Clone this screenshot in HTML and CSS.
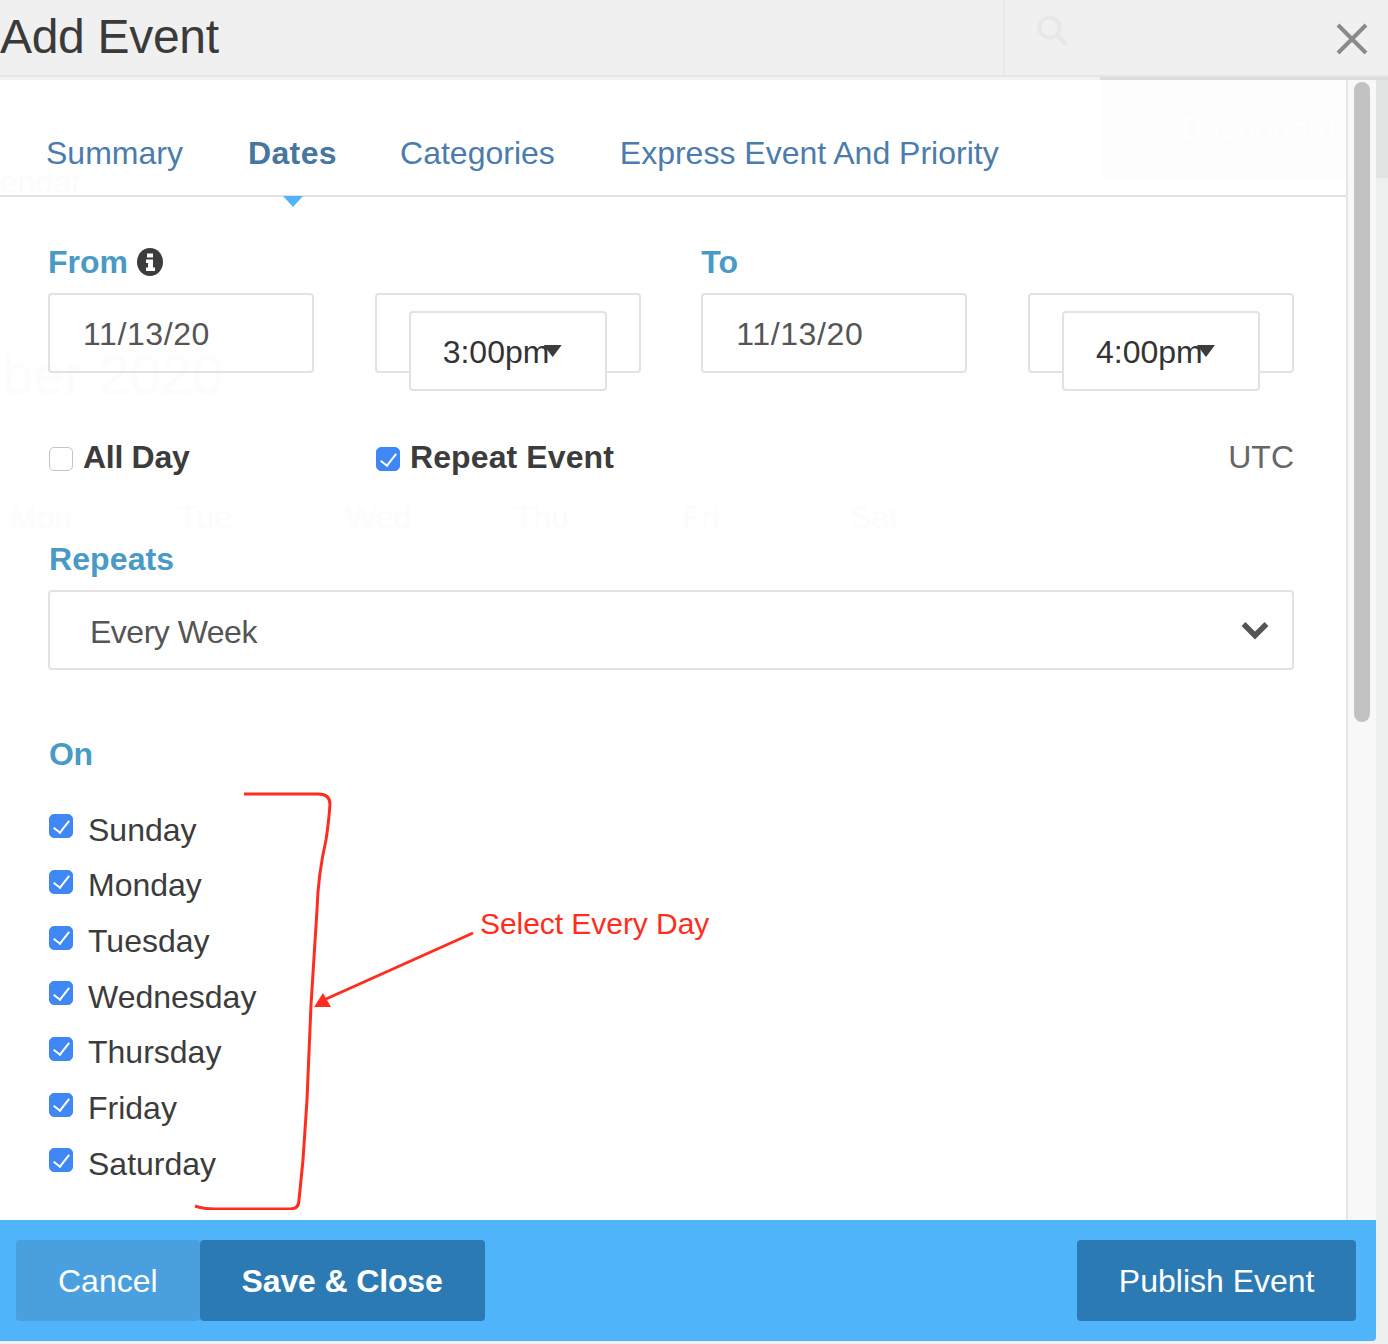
FILE: index.html
```html
<!DOCTYPE html>
<html lang="en">

<head>
    <meta charset="UTF-8">
    <meta name="viewport" content="width=device-width, initial-scale=1.0">
    <title>Add Event</title>
    <link rel="stylesheet" href="styles.css">
</head>

<body>
    <div class="page">
        <header class="top-bar">
            <h1 class="title">Add Event</h1>
            <div class="top-tools">
                <svg class="search-icon" width="30" height="30" viewBox="0 0 30 30">
                    <circle cx="12.5" cy="12.5" r="10" fill="none" stroke="#e7e7e7" stroke-width="4" />
                    <path d="M20 20l8 8" stroke="#e7e7e7" stroke-width="4" stroke-linecap="round" />
                </svg>
                <svg class="close-icon" width="32" height="32" viewBox="0 0 32 32">
                    <path d="M2 2l28 28M30 2L2 30" stroke="#8a8a8a" stroke-width="4" />
                </svg>
            </div>
        </header>
        <div class="top-edge"></div>

        <div class="modal">
            <div class="modal-body">
                <section class="panel">
                    <!-- faded page behind the modal -->
                    <div class="ghost-block"></div>
                    <span class="ghost ghost-dash">Dashboard</span>
                    <span class="ghost ghost-month">ber 2020</span>
                    <span class="ghost ghost-cal">endar</span>
                    <div class="ghost ghost-days">
                        <span>Mon</span><span>Tue</span><span>Wed</span><span>Thu</span><span>Fri</span><span>Sat</span>
                    </div>

                    <nav class="tabs">
                        <a class="tab">Summary</a>
                        <a class="tab active">Dates</a>
                        <a class="tab">Categories</a>
                        <a class="tab">Express Event And Priority</a>
                    </nav>

                    <form class="form">
                        <div class="date-grid">
                            <div class="date-col">
                                <label class="field-label">From
                                    <svg class="info-icon" width="26" height="28" viewBox="0 0 26 28">
                                        <ellipse cx="13" cy="14" rx="13" ry="14" fill="#3c3c3c" />
                                        <path d="M10 5.500h6v4h-6zM9 11.500h7v8h2v3.500H9v-3.500h2v-4.500H9z" fill="#fff" />
                                    </svg>
                                </label>
                                <input class="text-input" type="text" value="11/13/20">
                            </div>
                            <div class="time-box">
                                <div class="time-select">3:00pm<span class="caret"></span></div>
                            </div>
                            <div class="date-col">
                                <label class="field-label">To</label>
                                <input class="text-input" type="text" value="11/13/20">
                            </div>
                            <div class="time-box">
                                <div class="time-select">4:00pm<span class="caret"></span></div>
                            </div>
                        </div>

                        <div class="options">
                            <label class="option option-allday"><input type="checkbox" class="check"> All Day</label>
                            <label class="option option-repeat"><input type="checkbox" class="check" checked> Repeat Event</label>
                            <span class="zone">UTC</span>
                        </div>

                        <label class="field-label repeats-label">Repeats</label>
                        <div class="repeat-select">
                            <span class="repeat-value">Every Week</span>
                            <svg width="30" height="20" viewBox="0 0 30 20">
                                <path d="M3.500 4L15 15.500 26.500 4" fill="none" stroke="#555" stroke-width="5.500" />
                            </svg>
                        </div>

                        <label class="field-label on-label">On</label>
                        <ul class="days">
                            <li><input type="checkbox" class="check" checked> Sunday</li>
                            <li><input type="checkbox" class="check" checked> Monday</li>
                            <li><input type="checkbox" class="check" checked> Tuesday</li>
                            <li><input type="checkbox" class="check" checked> Wednesday</li>
                            <li><input type="checkbox" class="check" checked> Thursday</li>
                            <li><input type="checkbox" class="check" checked> Friday</li>
                            <li><input type="checkbox" class="check" checked> Saturday</li>
                        </ul>
                    </form>

                    <!-- red annotation drawn on top of the screenshot -->
                    <svg class="markup" width="520" height="430" viewBox="0 0 520 430">
                        <path d="M244 14H318Q330 14 330 24Q329 40 326 60Q318 95 317 130L311 225L307 320L303 380L299 420Q299 429 290 429H215Q203 429 195 426"
                            fill="none" stroke="#ff2d20" stroke-width="3" />
                        <path d="M473 153L326 219" fill="none" stroke="#ff2d20" stroke-width="3" />
                        <path d="M314 227L323 213L331 227z" fill="#ff2d20" />
                    </svg>
                    <span class="markup-text">Select Every Day</span>
                </section>
                <aside class="scroll-track">
                    <div class="scroll-thumb"></div>
                </aside>
            </div>

            <footer class="actions">
                <div class="actions-left">
                    <button class="btn btn-cancel">Cancel</button>
                    <button class="btn btn-save">Save &amp; Close</button>
                </div>
                <button class="btn btn-publish">Publish Event</button>
            </footer>
        </div>
    </div>
</body>

</html>
```
FILE: styles.css
```css
* {
    box-sizing: border-box;
}

body {
    margin: 0;
    font-family: "Liberation Sans", Arial, sans-serif;
    font-size: 32px;
    color: #3c3c3c;
}

input,
button {
    font-family: inherit;
    font-size: inherit;
}

.page {
    position: relative;
    width: 1388px;
    height: 1344px;
    overflow: hidden;
    background: linear-gradient(to bottom, #e2e3e3 178px, #eeefef 178px);
}

/* header */
.top-bar {
    display: flex;
    height: 75px;
    background-color: #f0f0f0;
}

.title {
    width: 1003px;
    margin: 0;
    font-size: 48px;
    font-weight: 400;
    line-height: 74px;
    letter-spacing: -0.3px;
    color: #3a3a3a;
}

.top-tools {
    flex: 1;
    display: flex;
    justify-content: space-between;
    padding-left: 32px;
    padding-right: 20px;
    border-left: 2px solid #e9e9e9;
}

.search-icon {
    margin-top: 15px;
}

.close-icon {
    margin-top: 23px;
}

.top-edge {
    height: 5px;
    border-top: 2px solid #e6e6e6;
    background: linear-gradient(to right, #f2f2f2 1100px, #dddddd 1100px);
}

/* modal */
.modal {
    width: 1376px;
}

.modal-body {
    display: flex;
    height: 1140px;
}

.panel {
    position: relative;
    width: 1348px;
    background-color: #fff;
    border-right: 2px solid #e6e6e6;
}

.scroll-track {
    width: 28px;
    padding: 2px 6px;
    background-color: #f8f8f8;
}

.scroll-thumb {
    width: 16px;
    height: 640px;
    border-radius: 8px;
    background-color: #c2c2c2;
}

/* faded background */
.ghost {
    position: absolute;
    color: #fcfcfc;
    white-space: nowrap;
}

.ghost-block {
    position: absolute;
    top: 0;
    left: 1100px;
    width: 246px;
    height: 98px;
    background-color: #fdfdfd;
}

.ghost-dash {
    top: 30px;
    left: 1180px;
    color: #fff;
}

.ghost-month {
    top: 262px;
    left: 2px;
    font-size: 56px;
}

.ghost-cal {
    top: 84px;
    left: 0;
}

.ghost-days {
    top: 419px;
    left: 10px;
    display: grid;
    grid-template-columns: repeat(6, 168px);
}

/* tabs */
.tabs {
    position: relative;
    display: flex;
    gap: 65px;
    height: 117px;
    padding-top: 55px;
    padding-left: 46px;
    border-bottom: 2px solid #e2e2e2;
    line-height: 37px;
    color: #4b7cab;
}

.tab.active {
    position: relative;
    margin-right: -2px;
    font-weight: 700;
    letter-spacing: 0.4px;
    color: #47769f;
}

.tab.active::after {
    content: "";
    position: absolute;
    left: 35px;
    top: 61px;
    border-left: 10px solid transparent;
    border-right: 10px solid transparent;
    border-top: 11px solid #50b4fb;
}

/* form */
.form {
    position: relative;
    padding: 47px 52px 0 48px;
}

.date-grid {
    display: grid;
    grid-template-columns: repeat(4, 266px);
    justify-content: space-between;
}

.field-label {
    display: block;
    margin-bottom: 12px;
    line-height: 37px;
    font-weight: 700;
    color: #4a9ac6;
}

.info-icon {
    vertical-align: -3px;
}

.text-input {
    display: block;
    width: 100%;
    height: 80px;
    padding: 2px 33px 0;
    border: 2px solid #e2e2e2;
    border-radius: 4px;
    background: transparent;
    letter-spacing: 0.6px;
    color: #555;
}

.time-box {
    position: relative;
    height: 80px;
    margin-top: 49px;
    border: 2px solid #e2e2e2;
    border-radius: 4px;
}

.time-select {
    position: absolute;
    top: 16px;
    left: 32px;
    width: 198px;
    height: 80px;
    padding-left: 32px;
    border: 2px solid #e2e2e2;
    border-radius: 4px;
    background-color: #fff;
    line-height: 78px;
    color: #333;
}

.caret {
    position: absolute;
    top: 32px;
    left: 133px;
    width: 18px;
    height: 12px;
    background-color: #3c3c3c;
    clip-path: polygon(0 0, 100% 0, 50% 100%);
}

.options {
    display: flex;
    margin-top: 66px;
    line-height: 37px;
}

.option {
    display: flex;
    align-items: center;
    font-weight: 700;
    color: #3c3c3c;
}

.option-allday {
    width: 327px;
    letter-spacing: -0.3px;
}

.option-repeat {
    letter-spacing: 0.1px;
}

.zone {
    margin-left: auto;
    color: #666;
}

.check {
    appearance: none;
    position: relative;
    flex: none;
    width: 24px;
    height: 24px;
    margin: 3px 10px 0 1px;
    border: 1.500px solid #c4c4c4;
    border-radius: 5px;
    background-color: #fff;
}

.check:checked {
    border-color: #3f87f5;
    background-color: #3f87f5;
}

.check:checked::after {
    content: "";
    position: absolute;
    left: 6.500px;
    top: 1.500px;
    width: 7px;
    height: 14px;
    border-right: 2.500px solid #fff;
    border-bottom: 2.500px solid #fff;
    transform: rotate(38deg);
}

.repeats-label {
    margin-top: 65px;
    padding-left: 1px;
    letter-spacing: 0.1px;
}

.repeat-select {
    display: flex;
    align-items: center;
    justify-content: space-between;
    height: 80px;
    padding: 0 22px 0 40px;
    border: 2px solid #e2e2e2;
    border-radius: 4px;
    color: #555;
}

.repeat-value {
    padding-top: 4px;
    letter-spacing: -0.5px;
}

.on-label {
    margin-top: 66px;
    margin-bottom: 0;
    padding-left: 1px;
    letter-spacing: -0.3px;
}

.days {
    margin: 29.500px 0 0;
    padding: 0;
    list-style: none;
}

.days li {
    display: flex;
    align-items: center;
    height: 55.670px;
    color: #3c3c3c;
}

.days .check {
    margin: -8px 15px 0 1px;
}

/* annotation */
.markup {
    position: absolute;
    top: 700px;
    left: 0;
    pointer-events: none;
}

.markup-text {
    position: absolute;
    top: 826px;
    left: 480px;
    font-size: 30px;
    line-height: 36px;
    letter-spacing: -0.05px;
    color: #ff2d20;
    white-space: nowrap;
}

/* footer */
.actions {
    display: flex;
    justify-content: space-between;
    align-items: center;
    height: 121px;
    padding: 0 20px 0 16px;
    border-bottom-right-radius: 4px;
    background-color: #50b4fb;
}

.actions-left {
    display: flex;
}

.btn {
    height: 81px;
    padding: 2px 42px 0;
    border: none;
    border-radius: 4px;
    color: #fff;
    white-space: nowrap;
}

.btn-cancel {
    background-color: #4aa0df;
}

.btn-save {
    font-weight: 700;
    letter-spacing: -0.15px;
    background-color: #2c7ab3;
}

.btn-publish {
    padding: 2px 41.500px 0;
    background-color: #2c7ab3;
}
```
